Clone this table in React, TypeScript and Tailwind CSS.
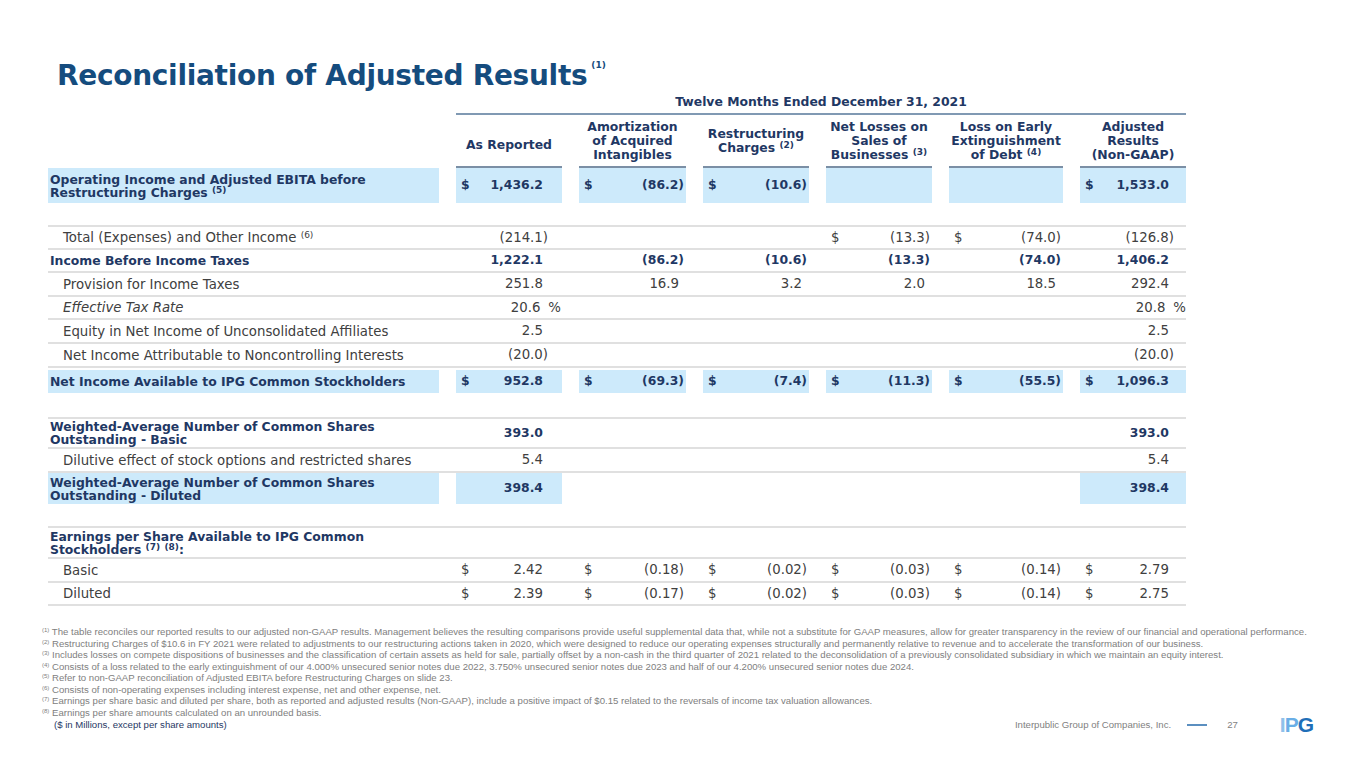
import React from 'react';

type Cell = [string, string] | null;

type Row = {
  label?: React.ReactNode;
  kind: 'blue' | 'bold' | 'plain' | 'italic' | 'blank';
  h: string;
  cells?: Cell[];
  fill?: boolean[];
  line?: boolean;
};

const GRID = 'grid w-[1138px] grid-cols-[391px_106px_107px_106px_106px_114px_106px] gap-x-[17px]';

const Sup = ({ t }: { t: string }) => (
  <span className="relative -top-[4px] text-[9px] leading-none">{t}</span>
);

const rows: Row[] = [
  {
    label: (
      <>
        Operating Income and Adjusted EBITA before
        <br />
        Restructuring Charges <Sup t="(5)" />
      </>
    ),
    kind: 'blue',
    h: 'h-[35px]',
    cells: [['$', '1,436.2'], ['$', '(86.2)'], ['$', '(10.6)'], null, null, ['$', '1,533.0']],
    fill: [true, true, true, true, true, true, true],
  },
  { kind: 'blank', h: 'h-[24px]', line: true },
  {
    label: (
      <>
        Total (Expenses) and Other Income <Sup t="(6)" />
      </>
    ),
    kind: 'plain',
    h: 'h-[23px]',
    cells: [['', '(214.1)'], null, null, ['$', '(13.3)'], ['$', '(74.0)'], ['', '(126.8)']],
    line: true,
  },
  {
    label: 'Income Before Income Taxes',
    kind: 'bold',
    h: 'h-[23px]',
    cells: [['', '1,222.1'], ['', '(86.2)'], ['', '(10.6)'], ['', '(13.3)'], ['', '(74.0)'], ['', '1,406.2']],
    line: true,
  },
  {
    label: 'Provision for Income Taxes',
    kind: 'plain',
    h: 'h-[24px]',
    cells: [['', '251.8'], ['', '16.9'], ['', '3.2'], ['', '2.0'], ['', '18.5'], ['', '292.4']],
    line: true,
  },
  {
    label: 'Effective Tax Rate',
    kind: 'italic',
    h: 'h-[23px]',
    cells: [['', '20.6 %'], null, null, null, null, ['', '20.8 %']],
    line: true,
  },
  {
    label: 'Equity in Net Income of Unconsolidated Affiliates',
    kind: 'plain',
    h: 'h-[24px]',
    cells: [['', '2.5'], null, null, null, null, ['', '2.5']],
    line: true,
  },
  {
    label: 'Net Income Attributable to Noncontrolling Interests',
    kind: 'plain',
    h: 'h-[24px]',
    cells: [['', '(20.0)'], null, null, null, null, ['', '(20.0)']],
    line: true,
  },
  {
    label: 'Net Income Available to IPG Common Stockholders',
    kind: 'blue',
    h: 'h-[27px] py-[2px]',
    cells: [['$', '952.8'], ['$', '(69.3)'], ['$', '(7.4)'], ['$', '(11.3)'], ['$', '(55.5)'], ['$', '1,096.3']],
    fill: [true, true, true, true, true, true, true],
  },
  { kind: 'blank', h: 'h-[24px]', line: true },
  {
    label: (
      <>
        Weighted-Average Number of Common Shares
        <br />
        Outstanding - Basic
      </>
    ),
    kind: 'bold',
    h: 'h-[30px]',
    cells: [['', '393.0'], null, null, null, null, ['', '393.0']],
    line: true,
  },
  {
    label: 'Dilutive effect of stock options and restricted shares',
    kind: 'plain',
    h: 'h-[24px]',
    cells: [['', '5.4'], null, null, null, null, ['', '5.4']],
    line: true,
  },
  {
    label: (
      <>
        Weighted-Average Number of Common Shares
        <br />
        Outstanding - Diluted
      </>
    ),
    kind: 'blue',
    h: 'h-[31px]',
    cells: [['', '398.4'], null, null, null, null, ['', '398.4']],
    fill: [true, true, false, false, false, false, true],
  },
  { kind: 'blank', h: 'h-[24px]', line: true },
  {
    label: (
      <>
        Earnings per Share Available to IPG Common
        <br />
        Stockholders <Sup t="(7)" /> <Sup t="(8)" />:
      </>
    ),
    kind: 'bold',
    h: 'h-[31px]',
    line: true,
  },
  {
    label: 'Basic',
    kind: 'plain',
    h: 'h-[24px]',
    cells: [['$', '2.42'], ['$', '(0.18)'], ['$', '(0.02)'], ['$', '(0.03)'], ['$', '(0.14)'], ['$', '2.79']],
    line: true,
  },
  {
    label: 'Diluted',
    kind: 'plain',
    h: 'h-[23px]',
    cells: [['$', '2.39'], ['$', '(0.17)'], ['$', '(0.02)'], ['$', '(0.03)'], ['$', '(0.14)'], ['$', '2.75']],
    line: true,
  },
];

const headers: React.ReactNode[] = [
  <span className="relative top-[4px]">As Reported</span>,
  <>
    Amortization
    <br />
    of Acquired
    <br />
    Intangibles
  </>,
  <>
    Restructuring
    <br />
    Charges <Sup t="(2)" />
  </>,
  <>
    Net Losses on
    <br />
    Sales of
    <br />
    Businesses <Sup t="(3)" />
  </>,
  <>
    Loss on Early
    <br />
    Extinguishment
    <br />
    of Debt <Sup t="(4)" />
  </>,
  <>
    Adjusted
    <br />
    Results
    <br />
    (Non-GAAP)
  </>,
];

const footnotes: [string, string][] = [
  ['(1)', 'The table reconciles our reported results to our adjusted non-GAAP results. Management believes the resulting comparisons provide useful supplemental data that, while not a substitute for GAAP measures, allow for greater transparency in the review of our financial and operational performance.'],
  ['(2)', 'Restructuring Charges of $10.6 in FY 2021 were related to adjustments to our restructuring actions taken in 2020, which were designed to reduce our operating expenses structurally and permanently relative to revenue and to accelerate the transformation of our business.'],
  ['(3)', 'Includes losses on compete dispositions of businesses and the classification of certain assets as held for sale, partially offset by a non-cash in the third quarter of 2021 related to the deconsolidation of a previously consolidated subsidiary in which we maintain an equity interest.'],
  ['(4)', 'Consists of a loss related to the early extinguishment of our 4.000% unsecured senior notes due 2022, 3.750% unsecured senior notes due 2023 and half of our 4.200% unsecured senior notes due 2024.'],
  ['(5)', 'Refer to non-GAAP reconciliation of Adjusted EBITA before Restructuring Charges on slide 23.'],
  ['(6)', ' Consists of non-operating expenses including interest expense, net and other expense, net.'],
  ['(7)', ' Earnings per share basic and diluted per share, both as reported and adjusted results (Non-GAAP), include a positive impact of $0.15 related to the reversals of income tax valuation allowances.'],
  ['(8)', ' Earnings per share amounts calculated on an unrounded basis.'],
];

const NumCell = ({ c, col, fill, strong }: { c: Cell; col: number; fill: boolean; strong: boolean }) => {
  const pr = col === 0 ? 'pr-[14px]' : col === 5 ? 'pr-[12px]' : 'pr-[2px]';
  let value: React.ReactNode = null;
  if (c) {
    const v = c[1];
    if (v.endsWith('%')) {
      value = (
        <span>
          {v.replace(' %', '')}
          <span className={`ml-[8px] ${col === 0 ? '-mr-[13px]' : '-mr-[12px]'}`}>%</span>
        </span>
      );
    } else if (v.endsWith(')')) {
      value = <span>{v}</span>;
    } else {
      value = <span className="pr-[5px]">{v}</span>;
    }
  }
  return (
    <div
      className={`flex items-center justify-between pl-[5px] ${pr} ${fill ? 'bg-[#cdeafb]' : ''} ${
        strong ? 'text-[12.4px] font-bold text-[#1f3864]' : 'text-[13.3px] text-[#404040]'
      }`}
    >
      <span>{c ? c[0] : ''}</span>
      {value}
    </div>
  );
};

export default function App() {
  return (
    <div className="relative w-[1365px] h-[768px] overflow-hidden bg-white font-['DejaVu_Sans',sans-serif]">
      <div className="pl-[57px] pt-[60px] h-[92px]">
        <h1 className="text-[28px] leading-[32px] font-bold text-[#154c7e] tracking-[-0.3px]">
          Reconciliation of Adjusted Results
          <span className="relative -top-[17px] ml-[4px] text-[9px] tracking-normal">(1)</span>
        </h1>
      </div>

      <div className="pl-[48px]">
        <div className={GRID}>
          <div />
          <div className="col-span-6 h-[23px] border-b-2 border-[#8099b3] flex items-center justify-center text-[12.4px] font-bold text-[#1f3864]">
            Twelve Months Ended December 31, 2021
          </div>
        </div>

        <div className={`${GRID} h-[53px]`}>
          <div />
          {headers.map((h, i) => (
            <div
              key={i}
              className="flex items-center justify-center border-b-2 border-[#7b8fa5] text-center text-[12.4px] leading-[14px] font-bold text-[#1f3864]"
            >
              <div>{h}</div>
            </div>
          ))}
        </div>

        {rows.map((r, i) => {
          const strong = r.kind === 'blue' || r.kind === 'bold';
          const fill = r.fill ?? [];
          return (
            <div key={i} className={`${GRID} ${r.h} ${r.line ? 'border-b-2 border-[#e0e0e0]' : ''}`}>
              <div
                className={`flex items-center leading-[13px] ${fill[0] ? 'bg-[#cdeafb]' : ''} ${
                  strong
                    ? 'pl-[2px] text-[12.4px] font-bold text-[#1f3864]'
                    : 'pl-[15px] text-[13.3px] text-[#404040]'
                } ${r.kind === 'italic' ? 'italic' : ''}`}
              >
                <div>{r.label}</div>
              </div>
              {[0, 1, 2, 3, 4, 5].map((j) =>
                r.cells ? (
                  <NumCell key={j} c={r.cells[j]} col={j} fill={!!fill[j + 1]} strong={strong} />
                ) : (
                  <div key={j} />
                ),
              )}
            </div>
          );
        })}
      </div>

      <div className="pl-[42px] pt-[20px] font-['Liberation_Sans_Narrow','Liberation_Sans',sans-serif] text-[9.6px] leading-[11.5px] text-[#808080]">
        {footnotes.map(([n, t]) => (
          <div key={n} className="h-[11.5px] whitespace-nowrap">
            <span className="relative -top-[3px] text-[6px] leading-none">{n}</span> {t}
          </div>
        ))}
        <div className="flex h-[13px] items-center justify-between pr-[52px]">
          <span className="pl-[12px] text-[#1f3864]">($ in Millions, except per share amounts)</span>
          <div className="flex items-center">
            <span className="text-[#7f7f7f]">Interpublic Group of Companies, Inc.</span>
            <span className="ml-[16px] w-[20px] h-[2px] bg-[#5b8fc0]" />
            <span className="ml-[20px] text-[#7f7f7f]">27</span>
            <span className="ml-[42px] font-['Liberation_Sans',sans-serif] text-[21px] leading-none font-black tracking-[-1px]">
              <span className="text-[#8fc1ea]">I</span>
              <span className="text-[#6aaee6]">P</span>
              <span className="text-[#1f6fb8]">G</span>
            </span>
          </div>
        </div>
      </div>
    </div>
  );
}
